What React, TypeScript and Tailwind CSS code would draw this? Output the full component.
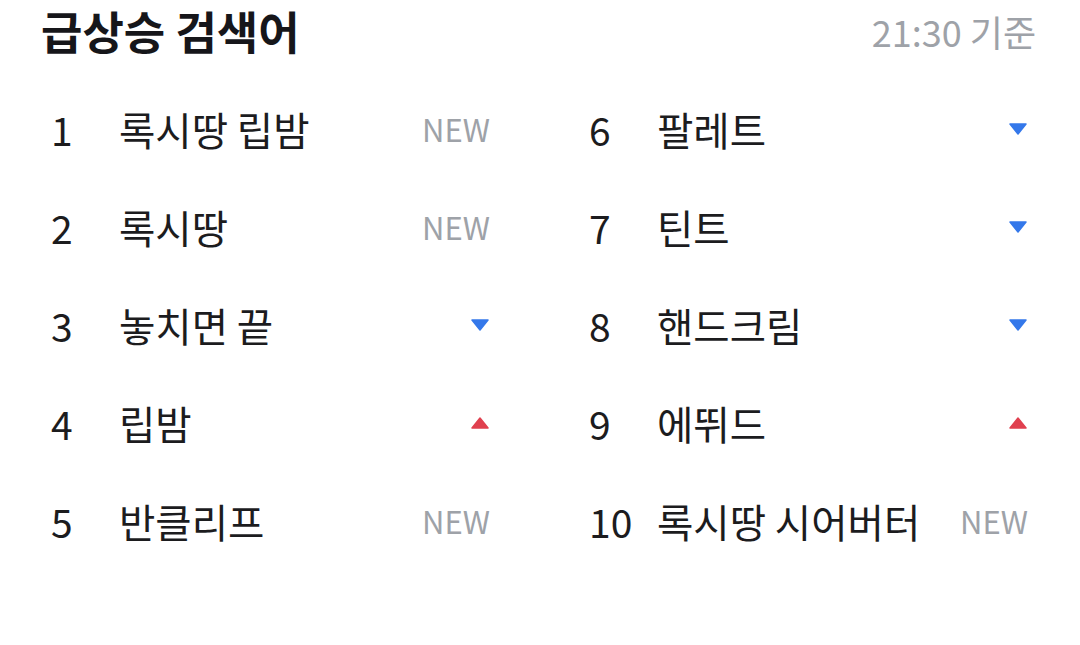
import React from 'react';

type Trend = 'new' | 'up' | 'down';

interface Keyword {
  rank: number;
  word: string;
  trend: Trend;
}

const keywords: Keyword[] = [
  { rank: 1, word: '록시땅 립밤', trend: 'new' },
  { rank: 2, word: '록시땅', trend: 'new' },
  { rank: 3, word: '놓치면 끝', trend: 'down' },
  { rank: 4, word: '립밤', trend: 'up' },
  { rank: 5, word: '반클리프', trend: 'new' },
  { rank: 6, word: '팔레트', trend: 'down' },
  { rank: 7, word: '틴트', trend: 'down' },
  { rank: 8, word: '핸드크림', trend: 'down' },
  { rank: 9, word: '에뛰드', trend: 'up' },
  { rank: 10, word: '록시땅 시어버터', trend: 'new' },
];

const TrendMark: React.FC<{ trend: Trend }> = ({ trend }) => {
  if (trend === 'new') {
    return <span className="text-[31px] leading-normal text-[#9ea2a8]">NEW</span>;
  }
  if (trend === 'up') {
    return (
      <svg width="18" height="12" viewBox="0 0 18 12" className="mr-[1px]">
        <path d="M9 1 L17 11 L1 11 Z" fill="#e0404f" strokeLinejoin="round" stroke="#e0404f" strokeWidth="1.5" />
      </svg>
    );
  }
  return (
    <svg width="18" height="12" viewBox="0 0 18 12" className="mr-[1px]">
      <path d="M1 1 L17 1 L9 11 Z" fill="#3478ea" strokeLinejoin="round" stroke="#3478ea" strokeWidth="1.5" />
    </svg>
  );
};

const Row: React.FC<{ item: Keyword }> = ({ item }) => (
  <div className="flex h-[98px] items-center">
    <span className="w-[71px] pl-[3px] text-[39px] leading-normal text-[#1c1c1e]">{item.rank}</span>
    <span className="flex-1 text-[39.5px] leading-normal text-[#1c1c1e]">{item.word}</span>
    <TrendMark trend={item.trend} />
  </div>
);

export default function App() {
  const left = keywords.slice(0, 5);
  const right = keywords.slice(5);

  return (
    <div
      className="h-[645px] w-[1080px] bg-white"
      style={{ fontFamily: '"Noto Sans CJK KR", "Noto Sans", sans-serif' }}
    >
      <div className="flex h-[62px] items-center justify-between pl-[41px] pr-[44px]">
        <h1 className="text-[45px] font-bold leading-[60px] text-[#16161a]">급상승 검색어</h1>
        <span className="text-[36px] leading-[60px] text-[#9ea2a8]">21:30 기준</span>
      </div>
      <div className="mt-[18px] grid grid-cols-2 gap-x-[96px] pl-[48px] pr-[52px]">
        <div className="flex flex-col">
          {left.map((k) => (
            <Row key={k.rank} item={k} />
          ))}
        </div>
        <div className="flex flex-col">
          {right.map((k) => (
            <Row key={k.rank} item={k} />
          ))}
        </div>
      </div>
    </div>
  );
}
